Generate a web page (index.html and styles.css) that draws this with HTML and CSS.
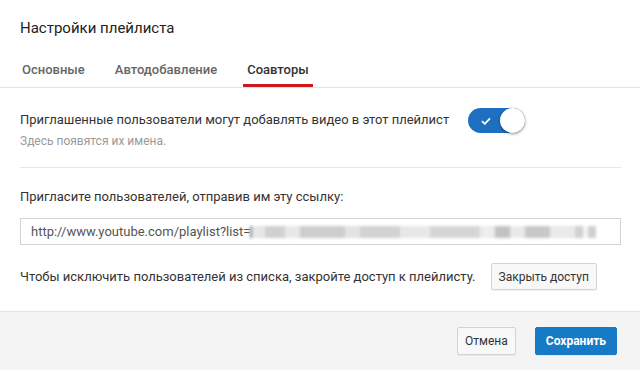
FILE: index.html
```html
<!DOCTYPE html>
<html lang="ru">
<head>
    <meta charset="UTF-8">
    <title>Настройки плейлиста</title>
    <link rel="stylesheet" href="styles.css">
</head>
<body>

<div class="dialog">
    <header>
        <h1>Настройки плейлиста</h1>
        <nav class="tabs">
            <span class="tab">Основные</span>
            <span class="tab">Автодобавление</span>
            <span class="tab active">Соавторы</span>
        </nav>
    </header>

    <div class="content">
        <div class="collab-row">
            <div class="collab-text">
                <p class="main-text">Приглашенные пользователи могут добавлять видео в этот плейлист</p>
                <p class="hint">Здесь появятся их имена.</p>
            </div>
            <div class="toggle">
                <svg class="check" width="10" height="8" viewBox="0 0 10 8">
                    <path d="M1 4.2 L3.8 6.8 L9 1.3" fill="none" stroke="#fff" stroke-width="1.8"/>
                </svg>
                <span class="knob"></span>
            </div>
        </div>

        <hr class="divider">

        <label class="invite-label">Пригласите пользователей, отправив им эту ссылку:</label>
        <div class="link-box">
            <span>http://www.youtube.com/playlist?list=</span><span class="blurred"></span>
        </div>

        <div class="close-row">
            <span>Чтобы исключить пользователей из списка, закройте доступ к плейлисту.</span>
            <button class="btn">Закрыть доступ</button>
        </div>
    </div>

    <footer>
        <button class="btn">Отмена</button>
        <button class="btn primary">Сохранить</button>
    </footer>
</div>

</body>
</html>
```

FILE: styles.css
```css
body {
    margin: 0;
    padding: 0;
    background-color: #fff;
    font-family: Roboto, "Liberation Sans", Arial, sans-serif;
    color: #333;
}
.dialog {
    width: 640px;
    height: 370px;
    display: flex;
    flex-direction: column;
}
header {
    padding-top: 18px;
}
h1 {
    margin: 0 0 0 20px;
    font-size: 15px;
    line-height: 20px;
    font-weight: 400;
    color: #222;
}
.tabs {
    display: flex;
    gap: 22px;
    padding-left: 18px;
    margin-top: 10px;
    border-bottom: 1px solid #e3e3e3;
}
.tab {
    padding: 12px 4px 4px;
    font-size: 13px;
    line-height: 20px;
    font-weight: 500;
    color: #666;
    border-bottom: 3px solid transparent;
}
.tab.active {
    color: #333;
    border-bottom-color: #cc181e;
}
.content {
    padding: 0 19px 0 20px;
    font-size: 13px;
}
.collab-row {
    display: flex;
    align-items: flex-start;
    gap: 19px;
    padding-top: 20px;
}
.collab-text {
    margin-top: 4px;
}
.main-text {
    margin: 0;
    line-height: 16px;
}
.hint {
    margin: 6px 0 0;
    font-size: 12px;
    line-height: 14px;
    color: #999;
}
.toggle {
    position: relative;
    width: 57px;
    height: 25px;
    border-radius: 13px;
    background-color: #1f6fc0;
    flex-shrink: 0;
}
.check {
    position: absolute;
    left: 13px;
    top: 9px;
}
.knob {
    position: absolute;
    right: 0;
    top: 0;
    width: 25px;
    height: 25px;
    border-radius: 50%;
    background-color: #fff;
    box-shadow: 0 1px 3px rgba(0,0,0,0.45);
}
.divider {
    margin: 19px 0 0;
    border: none;
    border-top: 1px solid #e8e8e8;
}
.invite-label {
    display: block;
    margin-top: 21px;
    line-height: 16px;
    color: #333;
}
.link-box {
    display: flex;
    align-items: center;
    height: 25px;
    margin-top: 13px;
    padding: 0 10px;
    border: 1px solid #d3d3d3;
    color: #555;
    font-size: 13px;
    overflow: hidden;
}
.blurred {
    flex: 1;
    height: 12px;
    margin-right: 2px;
    filter: blur(1.5px);
    background: linear-gradient(90deg,
        #888 0 2px, #e6e6e6 2px 15px, #d0d0d0 15px 35px, #e8e8e8 35px 50px,
        #cdcdcd 50px 95px, #e3e3e3 95px 110px, #d2d2d2 110px 150px,
        #e8e8e8 150px 180px, #d5d5d5 180px 230px, #ededed 230px 245px,
        #c2c2c2 245px 260px, #e9e9e9 260px 275px, #c8c8c8 275px 300px,
        #eaeaea 300px 325px, #d0d0d0 325px 333px, #f4f4f4 333px 338px,
        #cfcfcf 338px 346px, #fff 346px);
}
.close-row {
    display: flex;
    align-items: center;
    gap: 15px;
    margin-top: 18px;
}
.btn {
    height: 27px;
    padding: 0 7px;
    font-family: Roboto, "Liberation Sans", Arial, sans-serif;
    font-size: 12px;
    font-weight: 400;
    color: #333;
    background-color: #f8f8f8;
    border: 1px solid #d3d3d3;
    border-radius: 2px;
    box-shadow: 0 1px 0 rgba(0,0,0,0.05);
}
footer {
    flex: 1;
    display: flex;
    justify-content: flex-end;
    align-items: flex-start;
    gap: 19px;
    margin-top: 21px;
    padding: 15px 23px 0 0;
    background-color: #f4f4f4;
    border-top: 1px solid #e3e3e3;
}
footer .btn {
    height: 28px;
}
.btn.primary {
    padding: 0 10px;
    background-color: #167ac6;
    border-color: #167ac6;
    color: #fff;
    font-weight: 700;
}
```
